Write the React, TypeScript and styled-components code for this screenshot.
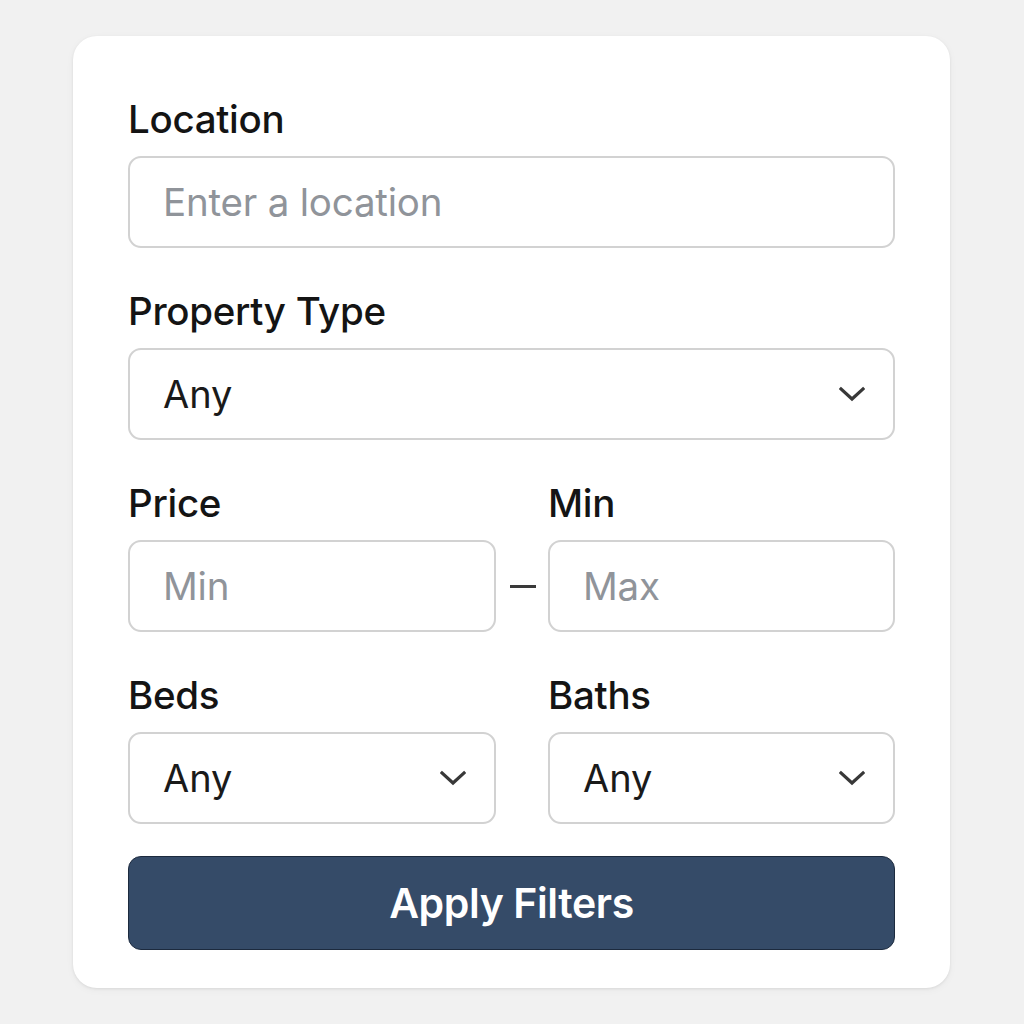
import React from "react";
import styled, { createGlobalStyle } from "styled-components";

const Global = createGlobalStyle`
  html, body { margin: 0; padding: 0; background: #f1f1f1; }
  body { font-family: Inter, "Noto Sans", "Liberation Sans", sans-serif; }
  * { box-sizing: border-box; }
`;

const Page = styled.div`
  width: 1024px;
  height: 1024px;
  padding: 36px 0 0 73px;
`;

const Card = styled.form`
  width: 877px;
  height: 952px;
  background: #ffffff;
  border-radius: 24px;
  box-shadow: 0 1px 3px rgba(0, 0, 0, 0.08), 0 2px 8px rgba(0, 0, 0, 0.04);
  padding: 61px 55px 0 55px;
  display: flex;
  flex-direction: column;
`;

const Group = styled.div`
  display: flex;
  flex-direction: column;
  gap: 15px;
  margin-bottom: 41px;
`;

const Row = styled.div<{ $last?: boolean }>`
  display: grid;
  grid-template-columns: 368px 52px 1fr;
  row-gap: 15px;
  margin-bottom: ${(p) => (p.$last ? "32px" : "41px")};
`;

const Label = styled.label<{ $col?: number }>`
  font-size: 38.5px;
  line-height: 44px;
  font-weight: 500;
  color: #141414;
  letter-spacing: -0.3px;
  grid-column: ${(p) => p.$col ?? "auto"};
`;

const Field = styled.div<{ $col?: number }>`
  height: 92px;
  border: 2px solid #d2d2d2;
  border-radius: 13px;
  background: #fff;
  display: flex;
  align-items: center;
  padding: 0 28px 0 33px;
  grid-column: ${(p) => p.$col ?? "auto"};
`;

const Input = styled.input`
  border: none;
  outline: none;
  background: transparent;
  width: 100%;
  font-family: inherit;
  font-size: 38.5px;
  color: #1a1a1a;
  padding: 0;
  letter-spacing: -0.2px;
  &::placeholder { color: #90949a; }
`;

const Value = styled.span`
  flex: 1;
  font-size: 38px;
  color: #1a1a1a;
`;

const Dash = styled.div`
  grid-column: 2;
  display: flex;
  align-items: center;
  justify-content: center;
  &::before {
    content: "";
    width: 26px;
    height: 3px;
    background: #3a3a3a;
    margin-left: 2px;
  }
`;

const Button = styled.button`
  height: 94px;
  border-radius: 13px;
  border: 1.5px solid #1c2a3e;
  background: #354b68;
  color: #fff;
  font-family: inherit;
  font-size: 41px;
  font-weight: 600;
  letter-spacing: -0.4px;
  cursor: pointer;
`;

const Chevron = () => (
  <svg width="26" height="16" viewBox="0 0 26 16" fill="none">
    <path d="M2 3 L13 13 L24 3" stroke="#383838" strokeWidth="3.2" strokeLinecap="square" />
  </svg>
);

const Select = ({ value, col }: { value: string; col?: number }) => (
  <Field $col={col}>
    <Value>{value}</Value>
    <Chevron />
  </Field>
);

export default function App() {
  return (
    <>
      <Global />
      <Page>
        <Card onSubmit={(e) => e.preventDefault()}>
          <Group>
            <Label>Location</Label>
            <Field>
              <Input placeholder="Enter a location" />
            </Field>
          </Group>
          <Group>
            <Label>Property Type</Label>
            <Select value="Any" />
          </Group>
          <Row>
            <Label $col={1}>Price</Label>
            <Label $col={3}>Min</Label>
            <Field $col={1}>
              <Input placeholder="Min" />
            </Field>
            <Dash />
            <Field $col={3}>
              <Input placeholder="Max" />
            </Field>
          </Row>
          <Row $last>
            <Label $col={1}>Beds</Label>
            <Label $col={3}>Baths</Label>
            <Select value="Any" col={1} />
            <Select value="Any" col={3} />
          </Row>
          <Button type="submit">Apply Filters</Button>
        </Card>
      </Page>
    </>
  );
}
